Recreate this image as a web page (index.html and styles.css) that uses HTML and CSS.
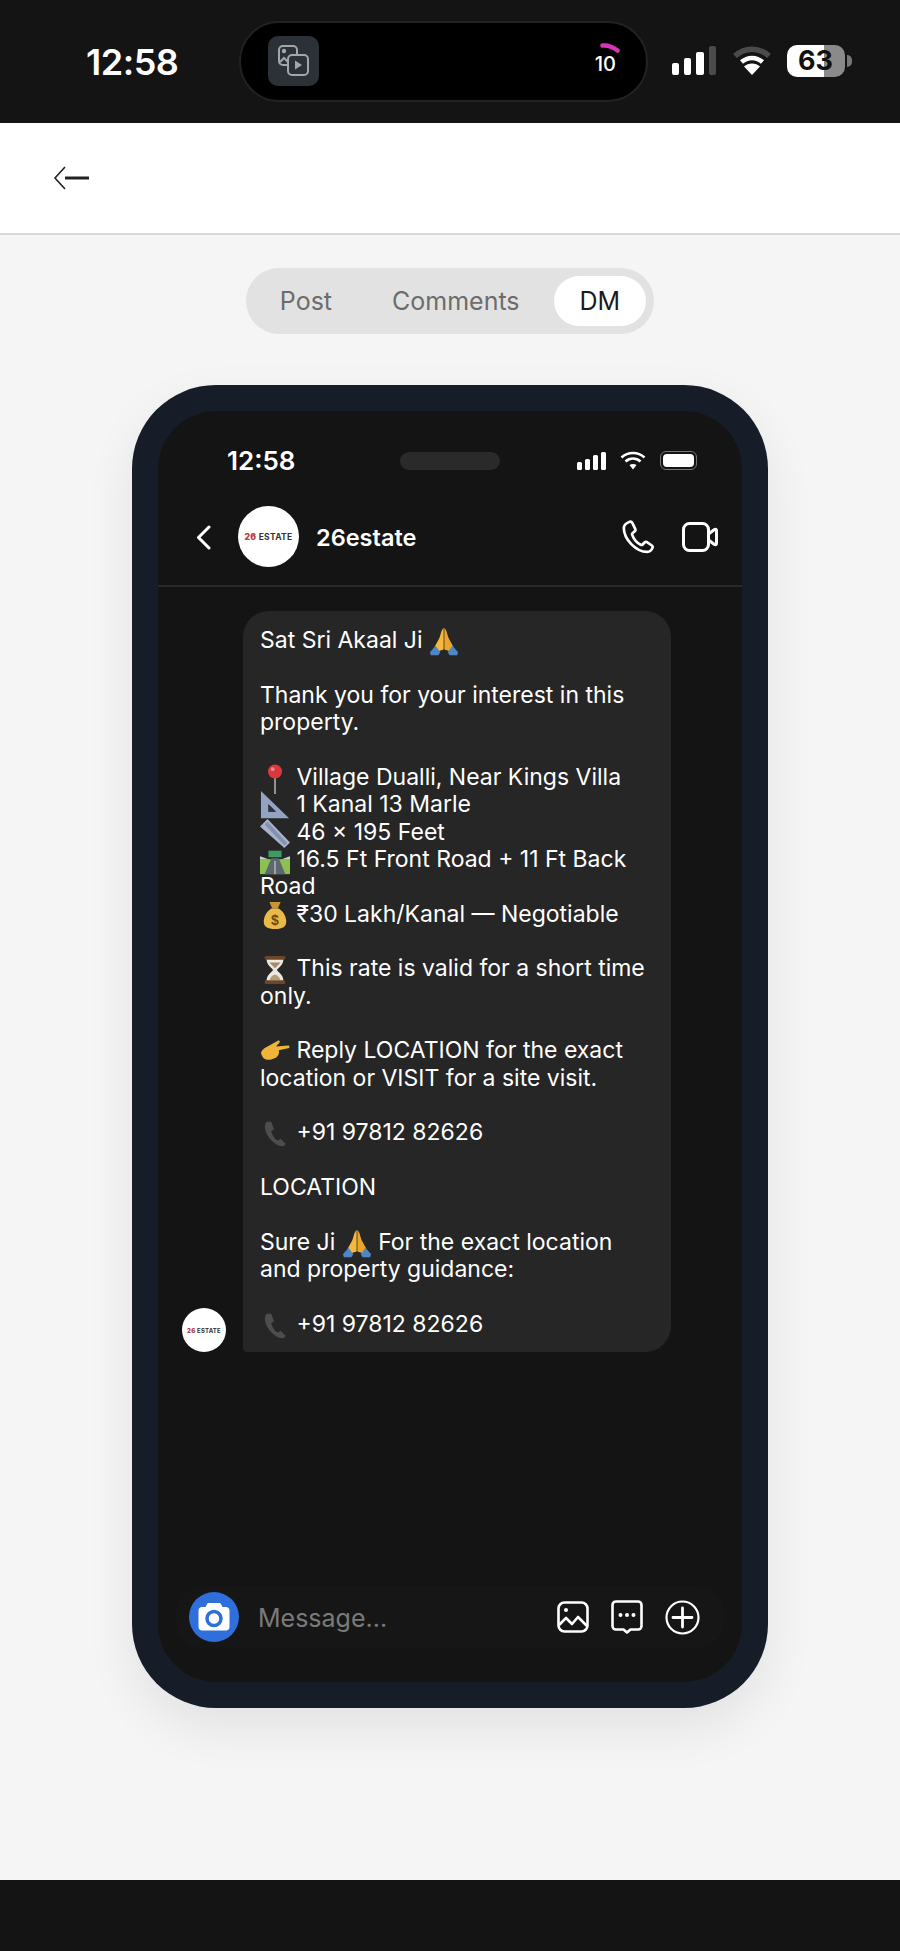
FILE: index.html
```html
<!DOCTYPE html>
<html lang="en">
<head>
    <meta charset="UTF-8">
    <meta name="viewport" content="width=device-width, initial-scale=1.0">
    <title>DM Preview</title>
    <link rel="stylesheet" href="styles.css">
</head>
<body>

<svg class="sprites" aria-hidden="true">
    <symbol id="e-pray" viewBox="0 0 32 32">
        <path d="M15.6 1C13 3 12.500 8 11 12L6 21l3 5 6.600-2z" fill="#f5b83d"/>
        <path d="M16.400 1C19 3 19.500 8 21 12l5 9-3 5-6.600-2z" fill="#e9a52c"/>
        <path d="M1 27l6-7 5 7-2 3H2zM31 27l-6-7-5 7 2 3h8z" fill="#4f86c6"/>
    </symbol>
    <symbol id="e-pin" viewBox="0 0 32 32">
        <rect x="15" y="12" width="2" height="20" fill="#9a9a9a"/>
        <circle cx="16" cy="8" r="7.500" fill="#d9383c"/>
        <circle cx="13.500" cy="5.500" r="2" fill="#f08a8a"/>
    </symbol>
    <symbol id="e-triangle" viewBox="0 0 32 32">
        <path fill-rule="evenodd" d="M1 0l30 29H1zM9 14v8h8z" fill="#94a3c0"/>
        <path d="M9 14v8h8z" fill="#2d3340"/>
    </symbol>
    <symbol id="e-ruler" viewBox="0 0 32 32">
        <path d="M0 9l8-8 24 25-6 6z" fill="#a7b3c9"/>
        <path d="M5 7l3-3 21 23-3 2z" fill="#8291ad"/>
    </symbol>
    <symbol id="e-road" viewBox="0 0 32 32">
        <rect x="9" y="5" width="14" height="7" fill="#3f9a63"/>
        <path d="M0 14h32v16H0z" fill="#8cc152"/>
        <path d="M0 11l9 3H0zM32 11l-9 3h9z" fill="#c7d3d9"/>
        <path d="M12 13h8l7 17H5z" fill="#5c6770"/>
        <path d="M15.500 16h1v14h-1z" fill="#e6e6e6"/>
    </symbol>
    <symbol id="e-hourglass" viewBox="0 0 32 32">
        <path d="M7 4h18c0 7-5 9-7 12 2 3 7 5 7 12H7c0-7 5-9 7-12-2-3-7-5-7-12z" fill="#ece7df"/>
        <path d="M10 8h12l-6 6z" fill="#a78a6c"/>
        <path d="M10 27c1-4 4-6 6-6s5 2 6 6z" fill="#b89b7d"/>
        <rect x="5" y="1" width="22" height="4" rx="1.500" fill="#6d4528"/>
        <rect x="5" y="27" width="22" height="4" rx="1.500" fill="#6d4528"/>
    </symbol>
    <symbol id="e-point" viewBox="0 0 32 32">
        <path d="M1 17c1-4 5-6 9-8l9-5c2-1 3 1 1 3l-3 3 13-1c2 0 2 3 0 3l-10 2c1 2 0 6-3 8l-5 2c-5 1-9 0-11-7z" fill="#eeb53a"/>
    </symbol>
    <symbol id="e-phone" viewBox="0 0 32 32">
        <path d="M7 3C4 6 5 13 9 19s10 10 15 10c2 0 3-2 3-3l-5-5-3 2c-3-1-6-6-7-10l3-2-3-8z" fill="#4d4d4d"/>
    </symbol>
</svg>

<div class="os-bar">
    <span class="os-time">12:58</span>
    <div class="island">
        <div class="island-tile">
            <svg width="34" height="34" viewBox="0 0 34 34" fill="none" stroke="#a3a6aa" stroke-width="2">
                <rect x="2" y="2" width="18" height="19" rx="4"/>
                <circle cx="7" cy="7" r="1.200" fill="#a3a6aa"/>
                <path d="M3 18l4-4 4 4" />
                <rect x="11" y="11" width="20" height="20" rx="4" fill="#2c3138"/>
                <path d="M18 16.500l7 4.500-7 4.500z" fill="#a3a6aa" stroke="none"/>
            </svg>
        </div>
        <div class="island-timer">
            <svg width="20" height="10" viewBox="0 0 20 10" fill="none">
                <path d="M2.500 2.500c5-.5 10 1 15 5" stroke="#d635b8" stroke-width="4.500" stroke-linecap="round"/>
            </svg>
            <span>10</span>
        </div>
    </div>
    <div class="os-icons">
        <svg width="46" height="30" viewBox="0 0 46 30">
            <rect x="1" y="17" width="7" height="12" rx="2" fill="#fff"/>
            <rect x="13" y="12" width="7" height="17" rx="2" fill="#fff"/>
            <rect x="25" y="6" width="8" height="23" rx="2" fill="#fff"/>
            <rect x="38" y="0" width="7" height="29" rx="2" fill="#4b4b4b"/>
        </svg>
        <svg class="os-wifi" width="40" height="30" viewBox="0 0 40 30" fill="none">
            <path d="M3 10c10-9 24-9 34 0" stroke="#4b4b4b" stroke-width="5.500"/>
            <path d="M9.500 16c6-5.500 15-5.500 21 0" stroke="#fff" stroke-width="4.500"/>
            <path d="M12 20.500c4.500-4 11.500-4 16 0L20 29z" fill="#fff"/>
        </svg>
        <div class="os-battery"><span>63</span></div>
        <div class="os-battery-tip"></div>
    </div>
</div>

<header class="top-nav">
    <svg width="37" height="24" viewBox="0 0 37 24" fill="none" stroke="#222">
        <path d="M12 1L2 12l10 11" stroke-width="1.600"/>
        <path d="M12 12h24" stroke-width="3"/>
    </svg>
</header>

<main class="content">
    <div class="tabs">
        <div class="tab">Post</div>
        <div class="tab">Comments</div>
        <div class="tab active">DM</div>
    </div>

    <div class="phone">
        <div class="screen">
            <div class="phone-status">
                <span class="phone-time">12:58</span>
                <div class="phone-notch"></div>
                <div class="phone-status-icons">
                    <svg width="29" height="18" viewBox="0 0 29 18" fill="#fff">
                        <rect x="0" y="10" width="5" height="8" rx="1.500"/>
                        <rect x="8" y="7" width="5" height="11" rx="1.500"/>
                        <rect x="16" y="3" width="5" height="15" rx="1.500"/>
                        <rect x="24" y="0" width="5" height="18" rx="1.500"/>
                    </svg>
                    <svg width="26" height="19" viewBox="0 0 26 19" fill="none" stroke="#fff" stroke-width="2.600">
                        <path d="M1.500 6.500c6.500-6 16.500-6 23 0"/>
                        <path d="M5.500 10.500c4.500-4 10.500-4 15 0"/>
                        <path d="M9.500 14c2-1.500 5-1.500 7 0L13 18.500z" fill="#fff" stroke="none"/>
                    </svg>
                    <div class="phone-battery"><div></div></div>
                </div>
            </div>

            <div class="chat-header">
                <svg class="chat-back" width="15" height="25" viewBox="0 0 15 25" fill="none" stroke="#fff" stroke-width="3" stroke-linecap="round" stroke-linejoin="round">
                    <path d="M13 2L2.500 12.500 13 23"/>
                </svg>
                <div class="avatar avatar-large"><b>26</b> ESTATE</div>
                <span class="chat-name">26estate</span>
                <div class="chat-actions">
                    <svg width="34" height="34" viewBox="0 0 24 24" fill="none" stroke="#fff" stroke-width="1.900" stroke-linejoin="round">
                        <path d="M5.500 1.500c-1.800.8-3.500 2.200-3.500 4.200C2 13.500 10.500 22.500 18.500 22.500c1.700 0 3.200-1.300 3.800-3 .2-.6 0-1.100-.5-1.500l-3.500-2.300c-.6-.4-1.200-.3-1.700.2l-1.300 1.400c-.4.400-.9.400-1.400.2-2.600-1.300-5-4.200-6-7-.2-.5 0-1 .4-1.300L9.700 8c.5-.4.600-1 .4-1.600L8 2c-.4-.7-1.500-1-2.500-.5z"/>
                    </svg>
                    <svg width="36" height="30" viewBox="0 0 36 30" fill="none" stroke="#fff" stroke-width="3" stroke-linejoin="round">
                        <rect x="1.500" y="1.500" width="25" height="27" rx="6"/>
                        <path d="M26.500 12l6-4.500c1-.6 2 0 2 1v13c0 1-1 1.600-2 1l-6-4.500z"/>
                    </svg>
                </div>
            </div>

            <div class="chat-body">
                <div class="msg-row">
                    <div class="avatar avatar-small"><b>26</b> ESTATE</div>
                    <div class="bubble">
                        Sat Sri Akaal Ji <svg class="emoji"><use href="#e-pray"/></svg><br>
                        <br>
                        Thank you for your interest in this property.<br>
                        <br>
                        <svg class="emoji"><use href="#e-pin"/></svg> Village Dualli, Near Kings Villa<br>
                        <svg class="emoji"><use href="#e-triangle"/></svg> 1 Kanal 13 Marle<br>
                        <svg class="emoji"><use href="#e-ruler"/></svg> 46 × 195 Feet<br>
                        <svg class="emoji"><use href="#e-road"/></svg> 16.5 Ft Front Road + 11 Ft Back Road<br>
                        <svg class="emoji" viewBox="0 0 32 32">
                            <path d="M10 2h12l-3 7h-6z" fill="#c99532"/>
                            <path d="M12 9h8c6 4 8 10 8 14 0 6-4 8-12 8S4 29 4 23c0-4 2-10 8-14z" fill="#e9b949"/>
                            <text x="16" y="27" class="emoji-dollar">$</text>
                        </svg> ₹30 Lakh/Kanal — Negotiable<br>
                        <br>
                        <svg class="emoji"><use href="#e-hourglass"/></svg> This rate is valid for a short time only.<br>
                        <br>
                        <svg class="emoji"><use href="#e-point"/></svg> Reply LOCATION for the exact location or VISIT for a site visit.<br>
                        <br>
                        <svg class="emoji"><use href="#e-phone"/></svg> +91 97812 82626<br>
                        <br>
                        LOCATION<br>
                        <br>
                        Sure Ji <svg class="emoji"><use href="#e-pray"/></svg> For the exact location and property guidance:<br>
                        <br>
                        <svg class="emoji"><use href="#e-phone"/></svg> +91 97812 82626
                    </div>
                </div>
            </div>

            <div class="composer">
                <div class="camera-btn">
                    <svg width="32" height="28" viewBox="0 0 32 28">
                        <path d="M11 0h10c1 0 1.800.5 2.200 1.400L24.500 4H28c2 0 3.500 1.500 3.500 3.500V24c0 2-1.500 3.500-3.500 3.500H4C2 27.500.5 26 .5 24V7.500C.5 5.500 2 4 4 4h3.500l1.300-2.600C9.200.5 10 0 11 0z" fill="#fff"/>
                        <circle cx="16" cy="15.500" r="7" fill="none" stroke="#2e6fdc" stroke-width="3.500"/>
                    </svg>
                </div>
                <span class="composer-placeholder">Message...</span>
                <div class="composer-icons">
                    <svg width="32" height="32" viewBox="0 0 32 32" fill="none" stroke="#fff" stroke-width="2.600" stroke-linejoin="round">
                        <rect x="1.500" y="1.500" width="29" height="29" rx="6"/>
                        <circle cx="9" cy="9" r="2" fill="#fff" stroke="none"/>
                        <path d="M2 24l7-7 6 6 6-7 9 9"/>
                    </svg>
                    <svg width="32" height="34" viewBox="0 0 32 34" fill="none" stroke="#fff" stroke-width="2.600" stroke-linejoin="round">
                        <path d="M5 1.500h22c2 0 3.500 1.500 3.500 3.500v21c0 2-1.500 3.500-3.500 3.500h-7.500L16 32.500l-3.500-3H5c-2 0-3.500-1.500-3.500-3.500V5C1.500 3 3 1.500 5 1.500z"/>
                        <circle cx="9.500" cy="15" r="2" fill="#fff" stroke="none"/>
                        <circle cx="16" cy="15" r="2" fill="#fff" stroke="none"/>
                        <circle cx="22.500" cy="15" r="2" fill="#fff" stroke="none"/>
                    </svg>
                    <svg width="35" height="35" viewBox="0 0 35 35" fill="none" stroke="#fff">
                        <circle cx="17.500" cy="17.500" r="16" stroke-width="2.200"/>
                        <path d="M17.500 8v19M8 17.500h19" stroke-width="2.800" stroke-linecap="round"/>
                    </svg>
                </div>
            </div>
        </div>
    </div>
</main>

<div class="bottom-bar"></div>

</body>
</html>
```

FILE: styles.css
```css
* {
    box-sizing: border-box;
}
body {
    font-family: Inter, "Noto Sans", sans-serif;
    background-color: #f5f5f6;
    margin: 0;
    min-height: 100vh;
    display: flex;
    flex-direction: column;
}
svg {
    display: block;
    flex-shrink: 0;
}
.sprites {
    width: 0;
    height: 0;
    overflow: hidden;
    position: absolute;
}

/* device status bar */
.os-bar {
    height: 123px;
    background-color: #141414;
    color: #fff;
    display: flex;
    align-items: center;
    padding-left: 86px;
}
.os-time {
    font-size: 36px;
    font-weight: 600;
    width: 153px;
    letter-spacing: -0.5px;
}
.island {
    width: 409px;
    height: 81px;
    margin-top: -1px;
    background-color: #000;
    border: 2px solid #222;
    border-radius: 40px;
    display: flex;
    align-items: center;
    justify-content: space-between;
    padding: 0 26px 0 27px;
}
.island-tile {
    width: 51px;
    height: 50px;
    background-color: #2c3138;
    border-radius: 10px;
    display: flex;
    align-items: center;
    justify-content: center;
}
.island-timer {
    display: flex;
    flex-direction: column;
    align-items: flex-end;
    font-size: 20px;
    font-weight: 500;
    line-height: 22px;
    margin-top: -5px;
}
.island-timer span {
    margin-right: 4px;
}
.os-icons {
    display: flex;
    align-items: center;
    margin-left: 23px;
    margin-top: -2px;
}
.os-wifi {
    margin-left: 15px;
}
.os-battery {
    width: 58px;
    height: 32px;
    margin-left: 15px;
    border-radius: 10px;
    background: linear-gradient(to right, #fff 64%, #8a8a8a 64%);
    color: #111;
    font-size: 27px;
    font-weight: 700;
    line-height: 32px;
    padding-left: 11px;
}
.os-battery-tip {
    width: 5px;
    height: 12px;
    margin-left: 2px;
    background-color: #777;
    border-radius: 0 6px 6px 0;
}

.top-nav {
    height: 112px;
    background-color: #fff;
    border-bottom: 2px solid #d8d8d8;
    display: flex;
    align-items: center;
    padding-left: 53px;
}

.content {
    flex-grow: 1;
    display: flex;
    flex-direction: column;
    align-items: center;
    padding-top: 33px;
}

/* Post / Comments / DM switch */
.tabs {
    display: flex;
    gap: 8px;
    padding: 8px;
    height: 66px;
    background-color: #e2e2e2;
    border-radius: 33px;
}
.tab {
    padding: 0 26px;
    font-size: 25px;
    line-height: 50px;
    color: #6c6c6c;
    border-radius: 25px;
}
.tab.active {
    background-color: #fff;
    color: #1a1a1a;
}

/* phone mockup */
.phone {
    width: 636px;
    height: 1323px;
    margin-top: 51px;
    padding: 26px;
    background-color: #171d28;
    border-radius: 84px;
    box-shadow: 0 20px 50px rgba(0, 0, 0, 0.08);
}
.screen {
    height: 100%;
    background-color: #141414;
    border-radius: 58px;
    color: #fff;
    display: flex;
    flex-direction: column;
    overflow: hidden;
}
.phone-status {
    display: grid;
    grid-template-columns: 1fr auto 1fr;
    align-items: center;
    height: 30px;
    margin: 34px 0 31px;
    padding: 0 45px 0 69px;
}
.phone-time {
    font-size: 26px;
    font-weight: 600;
}
.phone-notch {
    width: 100px;
    height: 18px;
    margin-left: -24px;
    background-color: #2a2a2a;
    border-radius: 9px;
}
.phone-status-icons {
    display: flex;
    align-items: center;
    justify-content: flex-end;
    gap: 14px;
}
.phone-battery {
    width: 37px;
    height: 19px;
    padding: 2px;
    border: 1px solid #777;
    border-radius: 6px;
}
.phone-battery div {
    height: 100%;
    background-color: #fff;
    border-radius: 4px;
}
.chat-header {
    display: flex;
    align-items: center;
    padding: 0 24px 18px 38px;
    border-bottom: 2px solid #2a2a2a;
}
.chat-back {
    margin-top: 2px;
}
.avatar {
    background-color: #fff;
    color: #333;
    border-radius: 50%;
    display: flex;
    align-items: center;
    justify-content: center;
    font-weight: 700;
    white-space: pre;
    flex-shrink: 0;
}
.avatar b {
    color: #b4404f;
}
.avatar-large {
    width: 61px;
    height: 61px;
    margin-left: 27px;
    font-size: 8.500px;
    letter-spacing: 0.3px;
}
.avatar-small {
    width: 44px;
    height: 44px;
    font-size: 6px;
    letter-spacing: 0.2px;
}
.chat-name {
    margin-left: 17px;
    margin-top: 2px;
    font-size: 23.500px;
    font-weight: 600;
}
.chat-actions {
    margin-left: auto;
    display: flex;
    align-items: center;
    gap: 27px;
}
.chat-body {
    flex-grow: 1;
    padding: 24px 24px 0;
}
.msg-row {
    display: flex;
    align-items: flex-end;
    gap: 17px;
}
.bubble {
    width: 428px;
    padding: 16px 17px 14px;
    background-color: #262626;
    border-radius: 26px 26px 26px 4px;
    font-size: 23px;
    line-height: 27.360px;
}
.emoji {
    display: inline-block;
    width: 30px;
    height: 30px;
    margin: -8px 0;
    vertical-align: middle;
}
.emoji-dollar {
    font-family: "Liberation Sans", sans-serif;
    font-size: 15px;
    font-weight: 700;
    text-anchor: middle;
    fill: #6b4a12;
}
.composer {
    display: flex;
    align-items: center;
    margin: 0 17px 33px;
    padding: 6px 25px 7px 14px;
    background-color: #161616;
    border-radius: 30px;
}
.camera-btn {
    width: 50px;
    height: 50px;
    background-color: #2e6fdc;
    border-radius: 50%;
    display: flex;
    align-items: center;
    justify-content: center;
}
.composer-placeholder {
    margin-left: 19px;
    margin-top: 2px;
    font-size: 25px;
    color: #7a7a7a;
}
.composer-icons {
    margin-left: auto;
    display: flex;
    align-items: center;
    gap: 22px;
}
.bottom-bar {
    height: 71px;
    background-color: #141414;
}
```
